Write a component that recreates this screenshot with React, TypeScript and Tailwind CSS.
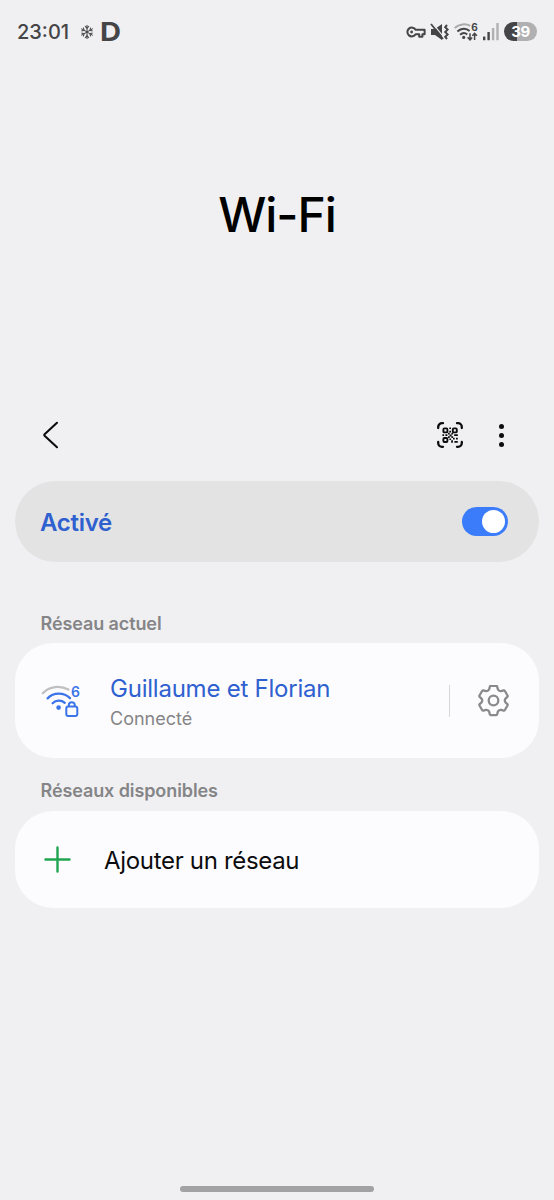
import { useState } from "react";
import type { ReactNode } from "react";

function SnowflakeIcon() {
  return (
    <svg width="14" height="16" viewBox="0 0 14 16" fill="none" stroke="#4a4a4c" strokeWidth="1.1">
      <path d="M7 1v14M1.2 4.6l11.6 6.8M12.8 4.6L1.2 11.4" />
      <path d="M5 2.2l2 2 2-2M5 13.8l2-2 2 2M1.4 7l2.6-.7L3.4 3.6M12.6 7L10 6.3l.6-2.7M1.4 9l2.6.7-.6 2.7M12.6 9l-2.6.7.6 2.7" />
    </svg>
  );
}

function KeyIcon() {
  return (
    <svg width="20" height="14" viewBox="0 0 20 14" fill="none" stroke="#454547" strokeWidth="2" strokeLinejoin="round">
      <path d="M9.6 4.8A4.4 4.4 0 1 0 9.6 9.2H13.2V11.8H16.4V9.2H18.6V4.8Z" />
      <circle cx="5.6" cy="7" r="1.4" fill="#454547" stroke="none" />
    </svg>
  );
}

function MuteVibrateIcon() {
  return (
    <svg width="20" height="18" viewBox="0 0 20 18" fill="none">
      <path d="M1 6H5L12 1V17L5 12H1Z" fill="#454547" />
      <path d="M2.6 .4L14 14.4" stroke="#f0f0f2" strokeWidth="1.2" />
      <path d="M1 1L13 16" stroke="#454547" strokeWidth="1.8" />
      <path d="M17 2L15.2 4.2L17.6 6.6L15.2 9L17.6 11.4L15.2 13.8L17 16" stroke="#454547" strokeWidth="2" />
    </svg>
  );
}

function StatusWifiIcon() {
  return (
    <svg width="26" height="20" viewBox="0 0 26 20" fill="none" strokeWidth="2">
      <path d="M.6 6C5.2 1.8 11.6 1.3 16.2 3.8" stroke="#a9a9ab" />
      <path d="M3.4 9.5C7.2 5.8 12.4 5.8 15.6 9" stroke="#454547" />
      <path d="M6.1 12.8C8.4 10.6 11.2 10.6 13.2 12.4" stroke="#454547" />
      <circle cx="9.7" cy="15.4" r="1.6" fill="#454547" />
      <path d="M16 11.2V17.4M13.6 15.2L16 17.8L18.2 15.4M20.6 18V11.8M18.3 13.8L20.6 11.4L22.9 13.8" stroke="#454547" strokeWidth="1.5" />
      <text x="17.2" y="9" fill="#454547" fontSize="10" fontWeight="700" fontFamily="Inter, sans-serif">
        6
      </text>
    </svg>
  );
}

function SignalIcon() {
  return (
    <svg width="16" height="18" viewBox="0 0 16 18">
      <rect x="0" y="13.5" width="2.4" height="3.8" rx=".5" fill="#454547" />
      <rect x="4.4" y="9" width="2.4" height="8.3" rx=".5" fill="#454547" />
      <rect x="8.9" y="5" width="2.4" height="12.3" rx=".5" fill="#b0b0b2" />
      <rect x="13.3" y="0" width="2.4" height="17.3" rx=".5" fill="#b0b0b2" />
    </svg>
  );
}

function QrScanIcon() {
  return (
    <svg width="28" height="28" viewBox="0 0 28 28" fill="none" stroke="#0c0c0e">
      <path
        d="M2.2 7V6A3.8 3.8 0 0 1 6 2.2H7M21 2.2H22A3.8 3.8 0 0 1 25.8 6V7M25.8 21V22A3.8 3.8 0 0 1 22 25.8H21M7 25.8H6A3.8 3.8 0 0 1 2.2 22V21"
        strokeWidth="2.3"
        strokeLinecap="round"
      />
      <rect x="7.4" y="7.4" width="4" height="4" rx="1" strokeWidth="1.9" />
      <rect x="16.8" y="7.4" width="4" height="4" rx="1" strokeWidth="1.9" />
      <rect x="7.4" y="17" width="4" height="4" rx="1" strokeWidth="1.9" />
      <path
        d="M13.3 6.4h1.7v1.7h-1.7zM13.3 9.8h1.7v1.7h-1.7zM6.4 13.2h1.7v1.7H6.4zM9.4 13.2h2v1.7h-2zM12 11.8h1.7v1.7H12zM13.6 13.4h2v2h-2zM12 15.2h1.7v1.7H12zM15.4 11.8h1.7v1.7h-1.7zM18.2 13.2h3.6v1.7h-3.6zM15.4 15.2h1.7v1.7h-1.7zM17 16.8h1.7v1.7H17zM20 16.8h1.8v1.7H20zM13.4 17.4h1.7v1.7h-1.7zM15.2 19.2h1.7v2.6h-1.7zM18.4 20h3.4v1.8h-3.4z"
        fill="#0c0c0e"
        stroke="none"
      />
    </svg>
  );
}

function SecuredWifiIcon() {
  return (
    <svg width="44" height="34" viewBox="0 0 44 34" fill="none" strokeWidth="2.3" strokeLinecap="round">
      <path d="M2.8 9.2C9.6 2 20.4 1.4 28.4 5.6" stroke="#bfbfc1" />
      <path d="M7.6 14.4C13.6 8.2 23.8 8.2 30 14.2" stroke="#3a74e8" />
      <path d="M12.6 19.2C16 15.8 21.4 15.8 24.8 18.8" stroke="#3a74e8" />
      <circle cx="18.6" cy="23.6" r="2.3" fill="#3a74e8" />
      <rect x="26.3" y="22.6" width="11" height="9.4" rx="2" stroke="#3a74e8" strokeWidth="2" />
      <path d="M28.8 22V21.2A3 3 0 0 1 34.8 21.2V22" stroke="#3a74e8" strokeWidth="2" />
      <text x="31" y="13" fill="#3a74e8" fontSize="14" fontWeight="600" fontFamily="Inter, sans-serif">
        6
      </text>
    </svg>
  );
}

function GearIcon() {
  return (
    <svg width="32" height="32" viewBox="-16.5 -15.5 32 32" fill="none" stroke="#8a8a8c" strokeWidth="2.3" strokeLinejoin="round">
      <path d="M-2.6 -14.6H2.6Q3.5 -14.6 3.7 -13.8L4.3 -11.4Q4.5 -10.4 5.6 -9.9Q6.7 -9.2 7.7 -9.4L10.1 -10.1Q10.9 -10.3 11.4 -9.5L14 -5Q14.4 -4.2 13.8 -3.6L12 -1.9Q11.3 -1.2 11.3 0Q11.3 1.2 12 1.9L13.8 3.6Q14.4 4.2 14 5L11.4 9.5Q10.9 10.3 10.1 10.1L7.7 9.4Q6.7 9.2 5.6 9.9Q4.5 10.4 4.3 11.4L3.7 13.8Q3.5 14.6 2.6 14.6H-2.6Q-3.5 14.6 -3.7 13.8L-4.3 11.4Q-4.5 10.4 -5.6 9.9Q-6.7 9.2 -7.7 9.4L-10.1 10.1Q-10.9 10.3 -11.4 9.5L-14 5Q-14.4 4.2 -13.8 3.6L-12 1.9Q-11.3 1.2 -11.3 0Q-11.3 -1.2 -12 -1.9L-13.8 -3.6Q-14.4 -4.2 -14 -5L-11.4 -9.5Q-10.9 -10.3 -10.1 -10.1L-7.7 -9.4Q-6.7 -9.2 -5.6 -9.9Q-4.5 -10.4 -4.3 -11.4L-3.7 -13.8Q-3.5 -14.6 -2.6 -14.6Z" />
      <circle r="4.8" />
    </svg>
  );
}

function StatusBar() {
  return (
    <header className="flex h-[63px] items-center justify-between pr-[17px] pl-[17px]">
      <div className="flex items-center">
        <span className="w-[63px] text-[20px] font-medium text-[#454547]">23:01</span>
        <SnowflakeIcon />
        <span className="mt-px ml-[6px] w-5 origin-left scale-x-[1.12] text-[26px] leading-none font-bold text-[#454547]">
          D
        </span>
      </div>
      <div className="flex items-center">
        <KeyIcon />
        <div className="ml-1">
          <MuteVibrateIcon />
        </div>
        <div className="ml-1">
          <StatusWifiIcon />
        </div>
        <div className="ml-[3px]">
          <SignalIcon />
        </div>
        <span className="ml-[5px] flex h-[19px] w-[33px] items-center justify-center rounded-full bg-linear-to-r from-[#454547] from-38% to-[#b0b0b2] to-38% text-[15px] leading-none font-bold tracking-[-0.5px] text-white">
          39
        </span>
      </div>
    </header>
  );
}

function SectionLabel({ children }: { children: ReactNode }) {
  return (
    <h2 className="pl-[25.5px] text-[18px] leading-6 font-semibold tracking-[-0.1px] text-[#858587]">
      {children}
    </h2>
  );
}

export default function App() {
  const [enabled, setEnabled] = useState(true);

  return (
    <div className="flex h-[1200px] w-[554px] flex-col bg-[#f0f0f2] font-['Inter',sans-serif]">
      <StatusBar />

      {/* Title */}
      <div className="flex h-[304px] items-center justify-center">
        <h1 className="text-[48px] leading-none font-[530] tracking-[-1.1px] text-black">Wi-Fi</h1>
      </div>

      {/* Toolbar */}
      <div className="mt-[43px] flex h-[50px] items-center justify-between pr-[50px] pl-[42px]">
        <button aria-label="Retour">
          <svg width="18" height="28" viewBox="0 0 18 28" fill="none" stroke="#0c0c0e" strokeWidth="2.1" strokeLinecap="round" strokeLinejoin="round">
            <path d="M15 1.8L2.6 13.2Q1.8 14 2.6 14.8L15 26.2" />
          </svg>
        </button>
        <div className="flex items-center gap-[35px]">
          <button aria-label="Scanner un code QR">
            <QrScanIcon />
          </button>
          <button aria-label="Plus d'options" className="flex flex-col gap-1">
            <span className="size-[5px] rounded-full bg-[#0c0c0e]" />
            <span className="size-[5px] rounded-full bg-[#0c0c0e]" />
            <span className="size-[5px] rounded-full bg-[#0c0c0e]" />
          </button>
        </div>
      </div>

      <main className="px-[15px] pt-[21px]">
        {/* Wi-Fi switch */}
        <div className="flex h-[81px] items-center justify-between rounded-full bg-[#e3e3e4] pr-[31px] pl-[25px]">
          <span className="pt-0.5 text-[24px] font-semibold tracking-[-0.3px] text-[#2f60cf]">Activé</span>
          <button
            role="switch"
            aria-checked={enabled}
            onClick={() => setEnabled(!enabled)}
            className={`flex h-[29px] w-[46px] items-center rounded-full px-[3px] ${
              enabled ? "justify-end bg-[#3b7cfb]" : "justify-start bg-gray-400"
            }`}
          >
            <span className="size-[23px] rounded-full bg-white" />
          </button>
        </div>

        {/* Current network */}
        <div className="mt-[50px]">
          <SectionLabel>Réseau actuel</SectionLabel>
        </div>
        <div className="mt-[7px] flex h-[115px] items-center rounded-[38px] bg-[#fcfcfe] pl-[25px]">
          <SecuredWifiIcon />
          <div className="ml-[26px] flex-1 pt-[3px]">
            <p className="text-[24px] leading-8 tracking-[-0.23px] text-[#2f60cf]">Guillaume et Florian</p>
            <p className="text-[18px] leading-[27px] text-[#858587]">Connecté</p>
          </div>
          <div className="mr-[27px] h-8 w-px bg-[#d8d8da]" />
          <button aria-label="Paramètres du réseau" className="mr-[30px]">
            <GearIcon />
          </button>
        </div>

        {/* Available networks */}
        <div className="mt-[21px]">
          <SectionLabel>Réseaux disponibles</SectionLabel>
        </div>
        <button className="mt-2 flex h-[97px] w-full items-center rounded-[38px] bg-[#fcfcfe] pl-[29px]">
          <svg width="28" height="28" viewBox="0 0 28 28" stroke="#1fa550" strokeWidth="2.4" strokeLinecap="round">
            <path d="M13.5 1.5V25.5M1.5 13.5H25.5" />
          </svg>
          <span className="ml-[32px] pt-0.5 text-[24px] tracking-[-0.32px] text-[#0c0c0e]">Ajouter un réseau</span>
        </button>
      </main>

      <div className="mt-auto mb-2 h-1.5 w-[194px] self-center rounded-full bg-[#a2a2a4]" />
    </div>
  );
}
